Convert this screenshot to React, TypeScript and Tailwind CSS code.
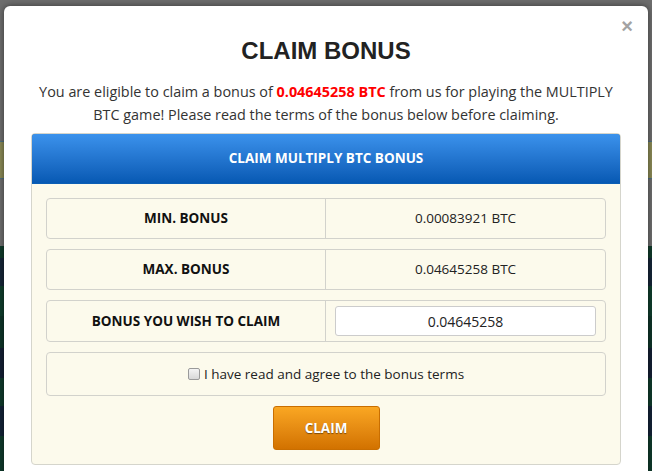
import React from "react";

const rows = [
  { label: "MIN. BONUS", value: "0.00083921 BTC" },
  { label: "MAX. BONUS", value: "0.04645258 BTC" },
];

export default function App() {
  return (
    <div className="relative h-[471px] w-[652px] overflow-hidden bg-[#6d6d6d]">
      {/* page behind the overlay */}
      <div className="absolute inset-0 flex flex-col">
        <div className="h-[141px]" />
        <div className="h-[38px] border-y border-[#4d6f80] bg-[#8a8955]" />
        <div className="h-[67px]" />
        <div className="flex flex-1 flex-col bg-[#0f3a2b]">
          <div className="h-[12px] bg-[#103a2a]" />
          <div className="h-[28px] bg-[#152537]" />
          <div className="h-[30px] bg-[#0f3d2c]" />
          <div className="h-[32px] bg-[#0e3428]" />
          <div className="h-[30px] bg-[#141f33]" />
          <div className="h-[28px] bg-[#0f3a2b]" />
          <div className="h-[30px] bg-[#132236]" />
        </div>
      </div>

      <div
        className="relative mx-[4px] mt-[6px] rounded-[6px] bg-white px-[27px] pt-[31px] shadow-[0_0_6px_rgba(0,0,0,0.5)]"
        style={{ fontFamily: '"Open Sans", sans-serif' }}
      >
        <span
          className="absolute right-[15px] top-[10px] text-[20px] font-bold leading-none text-[#a3a3a3]"
          style={{ fontFamily: '"Liberation Sans", Arial, sans-serif' }}
        >
          ×
        </span>

        <h1
          className="text-center text-[24px] font-bold leading-[28px] text-[#222]"
          style={{ fontFamily: '"Liberation Sans", Arial, sans-serif' }}
        >
          CLAIM BONUS
        </h1>

        <p className="mt-[16px] text-center text-[14.4px] leading-[22.5px] text-[#333]">
          You are eligible to claim a bonus of{" "}
          <span className="font-bold text-[#ff0000]">0.04645258 BTC</span> from us for playing the MULTIPLY BTC game!
          Please read the terms of the bonus below before claiming.
        </p>

        <div className="mt-[7px] overflow-hidden rounded-[4px] border border-[#d5d5cc] bg-[#fcfaec]">
          <div className="-mx-px -mt-px flex h-[51px] items-center justify-center rounded-t-[4px] border border-[#0b5fb5] bg-gradient-to-b from-[#3b92ec] to-[#0659b3] text-[13.5px] font-bold text-white">
            CLAIM MULTIPLY BTC BONUS
          </div>

          <div className="flex flex-col gap-[10px] px-[14px] pb-[14px] pt-[14px]">
            {rows.map((r) => (
              <div key={r.label} className="grid h-[41px] grid-cols-2 rounded-[4px] border border-[#d2d2cc] text-[13.5px] text-[#111]">
                <div className="flex items-center justify-center border-r border-[#d2d2cc] font-bold">{r.label}</div>
                <div className="flex items-center justify-center text-[#222]">{r.value}</div>
              </div>
            ))}

            <div className="grid h-[42px] grid-cols-2 rounded-[4px] border border-[#d2d2cc] text-[13.5px] text-[#111]">
              <div className="flex items-center justify-center border-r border-[#d2d2cc] font-bold">BONUS YOU WISH TO CLAIM</div>
              <div className="flex items-center px-[9px]">
                <div className="flex h-[30px] w-full items-center justify-center rounded-[3px] border border-[#ccc] bg-white text-[14px] text-[#222]">
                  0.04645258
                </div>
              </div>
            </div>

            <div className="flex h-[44px] items-center justify-center rounded-[4px] border border-[#d2d2cc] text-[13.5px] text-[#222]">
              <span className="h-[12px] w-[12px] rounded-[2px] border border-[#9a9a9a] bg-gradient-to-b from-[#f4f4f4] to-[#d8d8d8]" />
              <span className="ml-[4px]">I have read and agree to the bonus terms</span>
            </div>

            <div className="flex justify-center">
              <button className="h-[44px] w-[107px] rounded-[3px] border border-[#c96e00] bg-gradient-to-b from-[#faa722] to-[#d27200] text-[13.5px] font-bold text-white [text-shadow:0_1px_1px_rgba(0,0,0,0.45)]">
                CLAIM
              </button>
            </div>
          </div>
        </div>
        <div className="h-[20px]" />
      </div>
    </div>
  );
}
